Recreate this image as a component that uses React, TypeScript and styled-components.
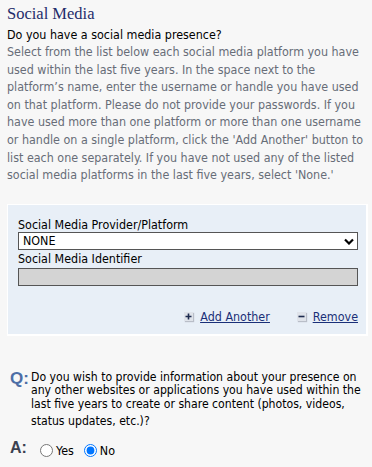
import React from 'react';
import styled, { createGlobalStyle } from 'styled-components';

const GlobalStyle = createGlobalStyle`
  html, body {
    margin: 0;
    padding: 0;
    background: #f7f7f7;
  }
  body {
    font-family: 'DejaVu Sans Condensed', 'DejaVu Sans', sans-serif;
    font-size: 12.4px;
  }
`;

const App: React.FC = () => {
  const intro =
    "Select from the list below each social media platform you have used within the last five years. In the space next to the platform\u2019s name, enter the username or handle you have used on that platform. Please do not provide your passwords. If you have used more than one platform or more than one username or handle on a single platform, click the 'Add Another' button to list each one separately. If you have not used any of the listed social media platforms in the last five years, select 'None.'";

  return (
    <Page>
      <GlobalStyle />
      <Title>Social Media</Title>
      <Question>Do you have a social media presence?</Question>
      <Intro>{intro}</Intro>

      <Panel>
        <Label>Social Media Provider/Platform</Label>
        <SelectWrap>
          <Select defaultValue="NONE">
            <option value="NONE">NONE</option>
          </Select>
          <Chevron width="10" height="7" viewBox="0 0 10 7">
            <path d="M1 1.5 L5 5.5 L9 1.5" fill="none" stroke="#000" strokeWidth="2.2" />
          </Chevron>
        </SelectWrap>
        <Label>Social Media Identifier</Label>
        <IdInput disabled />
        <Actions>
          <ActionLink href="#">
            <IconBox>
              <svg width="7" height="7" viewBox="0 0 7 7">
                <path d="M3.5 0.5 V6.5 M0.5 3.5 H6.5" stroke="#1d2b4f" strokeWidth="1.6" />
              </svg>
            </IconBox>
            <span>Add Another</span>
          </ActionLink>
          <ActionLink href="#">
            <IconBox>
              <svg width="7" height="7" viewBox="0 0 7 7">
                <path d="M0.5 3.5 H6.5" stroke="#1d2b4f" strokeWidth="1.6" />
              </svg>
            </IconBox>
            <span>Remove</span>
          </ActionLink>
        </Actions>
      </Panel>

      <QRow>
        <QMark>Q:</QMark>
        <QText>
          Do you wish to provide information about your presence on any other websites or
          applications you have used within the last five years to create or share content
          (photos, videos,
          <br />
          <Tail>status updates, etc.)?</Tail>
        </QText>
      </QRow>

      <ARow>
        <AMark>A:</AMark>
        <Choice>
          <input type="radio" name="other" />
          Yes
        </Choice>
        <Choice>
          <input type="radio" name="other" defaultChecked />
          No
        </Choice>
      </ARow>
    </Page>
  );
};

export default App;

const Page = styled.div`
  padding: 3px 4px 10px 7px;
  color: #000;
`;

const Title = styled.h1`
  margin: 0;
  font-family: 'Liberation Serif', serif;
  font-weight: normal;
  font-size: 16.5px;
  line-height: 22px;
  color: #1f2d6b;
`;

const Question = styled.div`
  margin-top: 2px;
  line-height: 16px;
  color: #000;
`;

const Intro = styled.p`
  margin: 0;
  line-height: 17.6px;
  color: #676d78;
`;

const Panel = styled.section`
  margin-top: 20px;
  background: #e8eff7;
  border: 1px solid #fff;
  border-width: 1px 2px 2px 1px;
  padding: 13px 8px 9px 10px;
`;

const Label = styled.div`
  line-height: 14px;
  color: #000;
`;

const SelectWrap = styled.div`
  position: relative;
  margin-bottom: 2px;
`;

const Select = styled.select`
  display: block;
  width: 100%;
  height: 18px;
  box-sizing: border-box;
  appearance: none;
  border: 1px solid #555;
  border-radius: 0;
  background: #fff;
  padding: 0 4px;
  font-family: 'DejaVu Sans Condensed', 'DejaVu Sans', sans-serif;
  font-size: 12.4px;
  color: #000;
`;

const Chevron = styled.svg`
  position: absolute;
  right: 4px;
  top: 6px;
  pointer-events: none;
`;

const IdInput = styled.input`
  display: block;
  width: 100%;
  height: 18px;
  box-sizing: border-box;
  margin: 2px 0 0;
  border: 1px solid #555;
  border-radius: 0;
  background: #d4d4d4;
`;

const Actions = styled.div`
  display: flex;
  justify-content: flex-end;
  gap: 27px;
  margin-top: 23px;
`;

const ActionLink = styled.a`
  display: flex;
  align-items: center;
  gap: 7px;
  color: #1a2f78;
  line-height: 16px;

  span {
    text-decoration: underline;
  }
`;

const IconBox = styled.span`
  display: inline-flex;
  align-items: center;
  justify-content: center;
  width: 9px;
  height: 9px;
  background: #dfe3ea;
  box-shadow: 1px 1px 1px #b9bec8;
`;

const QRow = styled.div`
  display: flex;
  align-items: flex-start;
  margin-top: 34px;
  padding-left: 3px;
`;

const QMark = styled.span`
  font-family: 'Liberation Sans', Arial, sans-serif;
  font-weight: bold;
  font-size: 17px;
  line-height: 18px;
  color: #4d6ea6;
  width: 21px;
  flex-shrink: 0;
`;

const QText = styled.div`
  font-size: 12.15px;
  line-height: 13.6px;
  color: #000;
  padding-top: 1px;
`;

const Tail = styled.span`
  display: inline-block;
  margin-top: 3px;
`;

const ARow = styled.div`
  display: flex;
  align-items: center;
  margin-top: 15px;
  padding-left: 3px;
`;

const AMark = styled.span`
  font-family: 'Liberation Sans', Arial, sans-serif;
  font-weight: bold;
  font-size: 16px;
  color: #3b4150;
  width: 30px;
  margin-top: -6px;
`;

const Choice = styled.label`
  display: flex;
  align-items: center;
  gap: 3px;
  margin-right: 10px;
  color: #000;

  input {
    margin: 0;
    width: 13px;
    height: 13px;
  }
`;
